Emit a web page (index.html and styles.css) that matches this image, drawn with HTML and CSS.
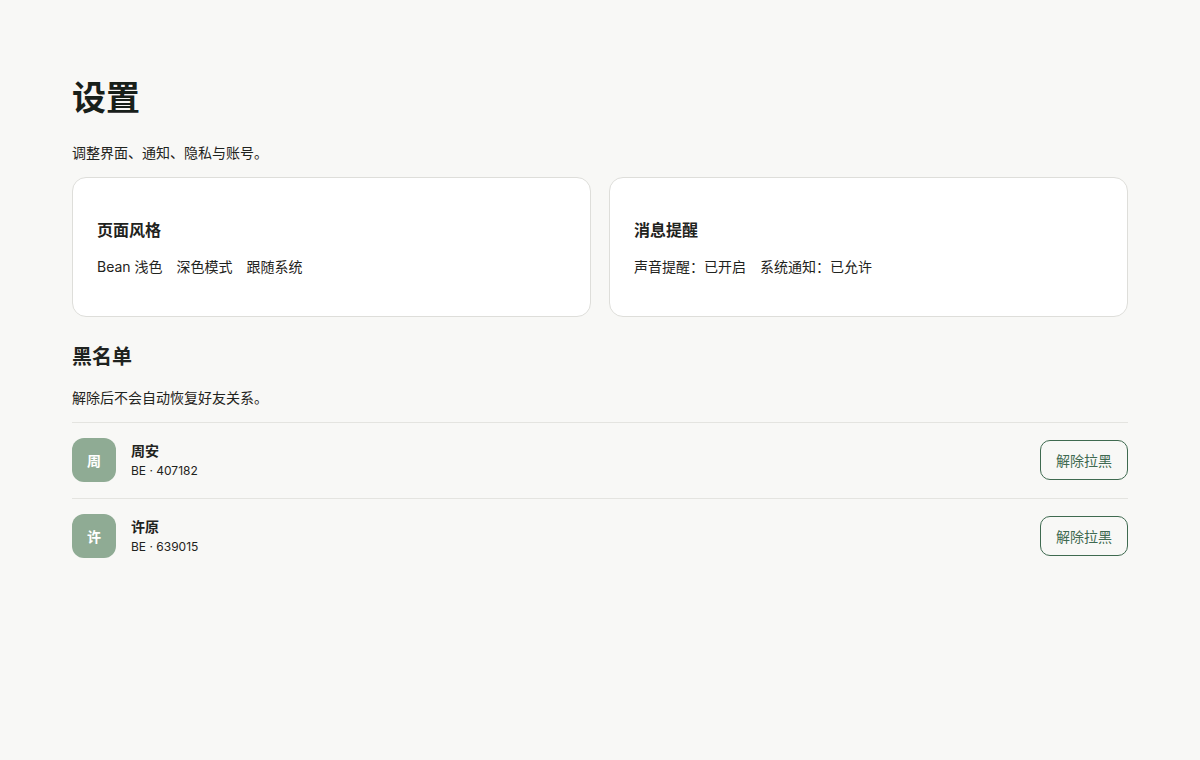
FILE: index.html
```html
<!DOCTYPE html>
<html lang="zh-CN">
<head>
    <meta charset="UTF-8">
    <meta name="viewport" content="width=device-width, initial-scale=1.0">
    <title>设置</title>
    <link rel="stylesheet" href="styles.css">
</head>
<body>
    <main class="page">
        <h1>设置</h1>
        <p class="lead">调整界面、通知、隐私与账号。</p>

        <div class="cards">
            <section class="card">
                <h2>页面风格</h2>
                <p class="options">
                    <span>Bean 浅色</span>
                    <span>深色模式</span>
                    <span>跟随系统</span>
                </p>
            </section>
            <section class="card">
                <h2>消息提醒</h2>
                <p class="options">
                    <span>声音提醒：已开启</span>
                    <span>系统通知：已允许</span>
                </p>
            </section>
        </div>

        <section class="blocklist">
            <h2>黑名单</h2>
            <p class="lead">解除后不会自动恢复好友关系。</p>
            <ul class="rows">
                <li class="row">
                    <div class="avatar">周</div>
                    <div class="who">
                        <div class="name">周安</div>
                        <div class="uid">BE · 407182</div>
                    </div>
                    <button class="unblock">解除拉黑</button>
                </li>
                <li class="row">
                    <div class="avatar">许</div>
                    <div class="who">
                        <div class="name">许原</div>
                        <div class="uid">BE · 639015</div>
                    </div>
                    <button class="unblock">解除拉黑</button>
                </li>
            </ul>
        </section>
    </main>
</body>
</html>
```

FILE: styles.css
```css
/* Dasar halaman */
body {
    margin: 0;
    background: #f8f8f6;
    color: #1f2320;
    font-family: Inter, "Noto Sans CJK SC", sans-serif;
}

.page {
    padding: 76px 72px 40px;
}

h1 {
    margin: 0;
    font-size: 34px;
    line-height: 43px;
    font-weight: 700;
    color: #18201a;
}

.lead {
    margin: 23px 0 0;
    font-size: 14px;
    line-height: 22px;
}

/* Kartu pengaturan */
.cards {
    display: grid;
    grid-template-columns: 1fr 1fr;
    gap: 18px;
    margin-top: 13px;
}

.card {
    background: #fff;
    border: 1px solid #dededa;
    border-radius: 14px;
    padding: 40px 24px 38px;
}

.card h2 {
    margin: 0;
    font-size: 16px;
    line-height: 24px;
    font-weight: 700;
}

.options {
    display: flex;
    gap: 14px;
    margin: 14px 0 0;
    font-size: 14px;
    line-height: 22px;
}

/* Daftar blokir */
.blocklist {
    margin-top: 26px;
}

.blocklist h2 {
    margin: 0;
    font-size: 20px;
    line-height: 28px;
    font-weight: 700;
}

.blocklist .lead {
    margin-top: 16px;
}

.rows {
    list-style: none;
    margin: 13px 0 0;
    padding: 0;
}

.row {
    display: flex;
    align-items: center;
    gap: 15px;
    padding: 15px 0 16px;
    border-top: 1px solid #e4e4e0;
}

.avatar {
    width: 44px;
    height: 44px;
    border-radius: 12px;
    background: #8fab94;
    color: #fff;
    font-size: 14px;
    font-weight: 700;
    display: flex;
    align-items: center;
    justify-content: center;
}

.who {
    flex: 1;
}

.name {
    font-size: 14px;
    line-height: 22px;
    font-weight: 700;
}

.uid {
    font-size: 12px;
    line-height: 18px;
}

.unblock {
    height: 40px;
    width: 88px;
    padding: 0;
    background: transparent;
    border: 1px solid #3f6a50;
    border-radius: 10px;
    color: #3f6a50;
    font-family: inherit;
    font-size: 14px;
}
```
